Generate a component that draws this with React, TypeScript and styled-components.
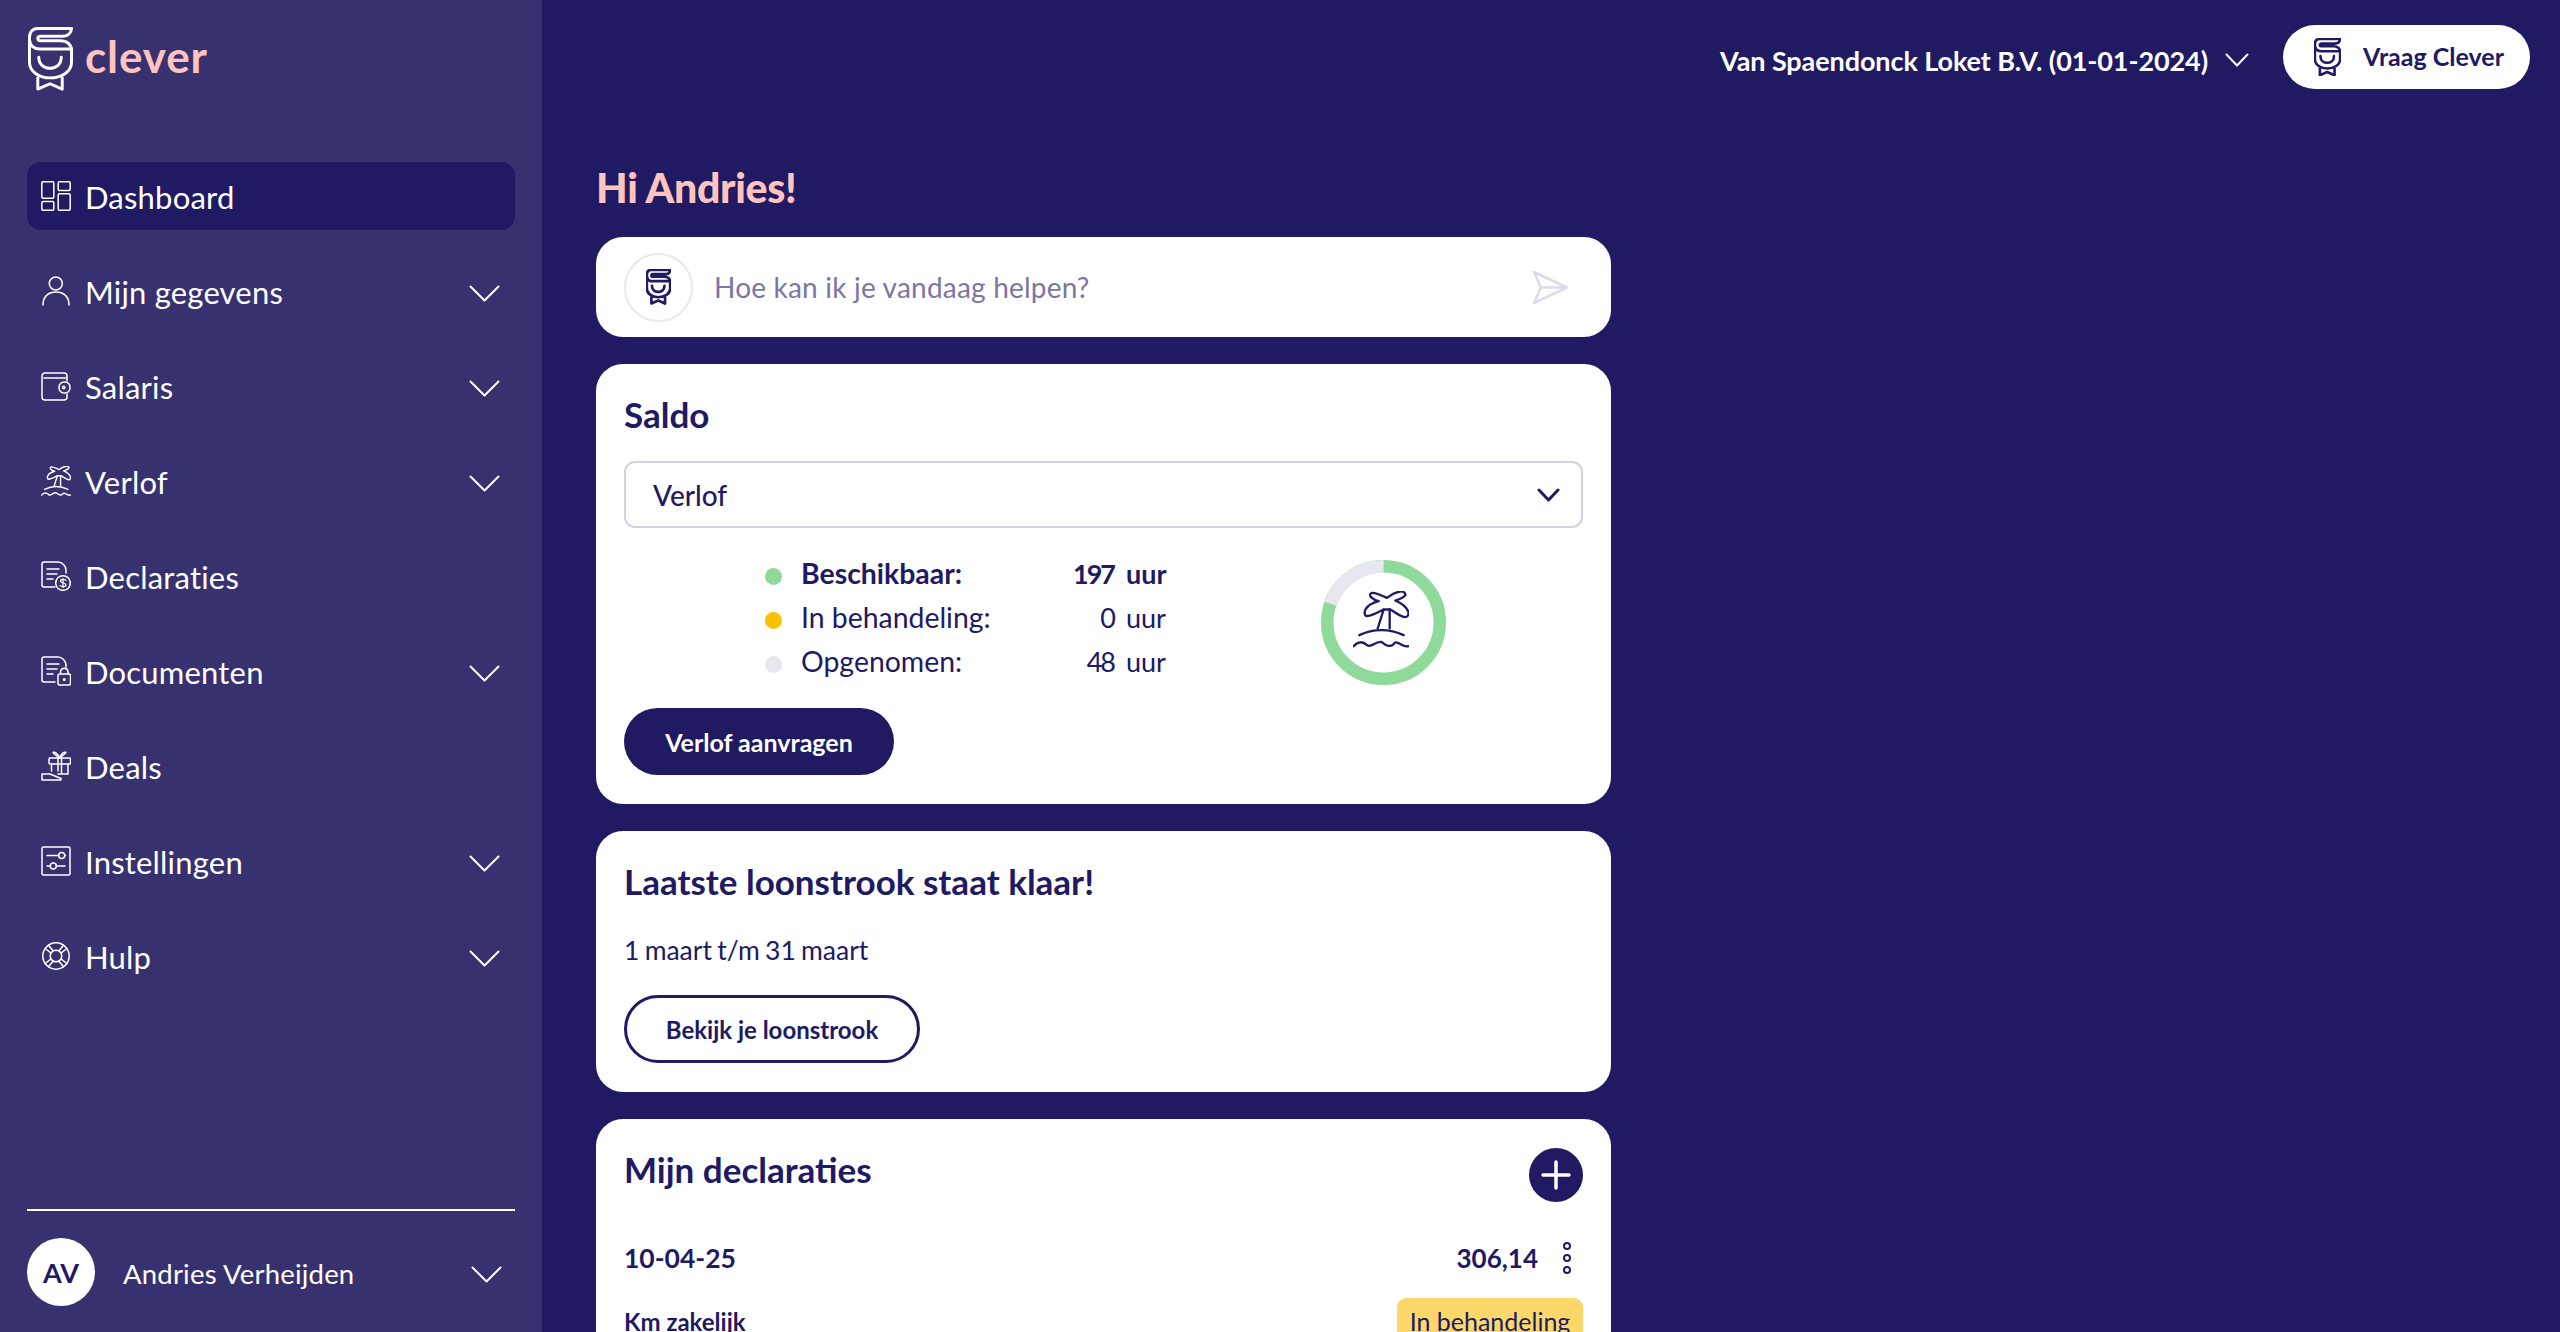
import React from "react";
import styled, { createGlobalStyle } from "styled-components";

const navy = "#201a63";
const font = `"Lato", "Noto Sans", "Liberation Sans", sans-serif`;

const Global = createGlobalStyle`
  html, body { margin: 0; padding: 0; height: 100%; overflow: hidden; background: ${navy}; }
  * { box-sizing: border-box; }
  body { font-family: ${font}; color: ${navy}; }
`;

const Page = styled.div`display: flex; width: 100%; height: 100vh; overflow: hidden; background: ${navy};`;
const Sidebar = styled.aside`
  width: 542px; flex: none; height: 100%; background: #38316f; color: #fff;
  padding: 27px 27px 26px; display: flex; flex-direction: column;
`;
const LogoRow = styled.div`display: flex; align-items: center; gap: 12px; height: 65px; padding-left: 1px;`;
const LogoText = styled.span`font-size: 44px; font-weight: 700; color: #ffc4bd; letter-spacing: 0.9px; line-height: 60px; margin-top: -7px;`;
const Nav = styled.nav`display: flex; flex-direction: column; gap: 27px; margin-top: 70px;`;
const NavItem = styled.div<{ $active?: boolean }>`
  height: 68px; display: flex; align-items: center; padding: 0 15px 0 14px; border-radius: 14px;
  background: ${(p) => (p.$active ? navy : "transparent")};
`;
const NavLabel = styled.span`font-size: 31px; margin: 2px 0 0 14px; flex: 1; letter-spacing: 0.2px; line-height: 40px;`;
const NavChevron = styled.span`display: flex; margin-top: 4px;`;
const Footer = styled.div`
  margin-top: auto; border-top: 2px solid #fff; padding-top: 27px; display: flex; align-items: center;
`;
const Avatar = styled.div`
  width: 68px; height: 68px; border-radius: 50%; background: #fff; color: ${navy};
  display: flex; align-items: center; justify-content: center; font-weight: 700; font-size: 27px;
`;
const UserName = styled.span`font-size: 27.5px; margin: 2px 0 0 28px; flex: 1; letter-spacing: 0.2px;`;
const FooterChevron = styled.span`display: flex; margin: 4px 13px 0 0;`;

const Main = styled.main`flex: 1; min-width: 0; height: 100%; overflow: hidden; padding: 25px 30px 0 54px;`;
const TopBar = styled.header`display: flex; justify-content: flex-end; align-items: center; height: 64px;`;
const Company = styled.span`font-size: 27px; font-weight: 700; color: #fff; margin-top: 6px; letter-spacing: -0.09px;`;
const TopChevron = styled.span`display: flex; margin: 6px 34px 0 17px;`;
const AskButton = styled.button`
  width: 247px; height: 64px; border: 0; border-radius: 32px; background: #fff; color: ${navy};
  display: flex; align-items: center; padding: 0 0 0 31px; font-family: ${font}; font-size: 25px; font-weight: 700;
`;
const AskLabel = styled.span`margin-left: 22px; margin-top: -2px;`;
const Column = styled.div`width: 1015px; display: flex; flex-direction: column;`;
const Greeting = styled.h1`margin: 74px 0 24px; font-size: 41px; line-height: 50px; font-weight: 900; letter-spacing: -0.3px; color: #ffc4bd;`;
const Card = styled.section`
  background: #fff; border-radius: 27px; padding: 28px 28px 29px; margin-bottom: 27px; flex: none;
`;
const ChatCard = styled(Card)`height: 100px; padding: 0 42px 0 28px; display: flex; align-items: center;`;
const ChatBadge = styled.div`
  width: 69px; height: 69px; border-radius: 50%; border: 2px solid #e9e8f0;
  display: flex; align-items: center; justify-content: center; flex: none;
`;
const Placeholder = styled.span`font-size: 28px; color: #7b76a5; margin-left: 21px; flex: 1; letter-spacing: 0.2px;`;
const CardTitle = styled.h2`margin: 0; padding-bottom: 2px; font-size: 35px; line-height: 44px; font-weight: 700;`;
const Select = styled.div`
  height: 67px; margin-top: 23px; border: 2px solid #d3d1e2; border-radius: 11px;
  display: flex; align-items: center; justify-content: space-between; padding: 0 21px 0 27px;
  font-size: 28px; font-weight: 500;
`;
const SaldoBody = styled.div`display: flex; align-items: flex-start; padding: 23px 0 0 141px;`;
const Legend = styled.div`width: 401px; display: flex; flex-direction: column;`;
const LegendRow = styled.div<{ $bold?: boolean }>`
  height: 44px; display: flex; align-items: center; font-size: 28.4px; font-weight: ${(p) => (p.$bold ? 700 : 400)};
`;
const Dot = styled.span<{ $color: string }>`
  width: 17px; height: 17px; border-radius: 50%; background: ${(p) => p.$color}; margin: 7px 19px 0 0; flex: none;
`;
const LegendLabel = styled.span`flex: 1; white-space: nowrap;`;
const LegendAmount = styled.span`text-align: right; font-size: 27px; letter-spacing: -2px;`;
const LegendUnit = styled.span`width: 40px; margin-left: 12px; white-space: nowrap; font-size: 27px;`;
const Donut = styled.div`
  width: 125px; height: 125px; margin: 9px 0 0 155px; position: relative; flex: none;
  display: flex; align-items: center; justify-content: center;
`;
const DonutRing = styled.svg`position: absolute; inset: 0;`;
const PalmBox = styled.span`display: flex; margin: 0 6px 6px 0;`;
const Primary = styled.button`
  height: 67px; width: 270px; margin-top: 23px; display: block; border-radius: 34px; border: 0; background: ${navy}; color: #fff;
  font-family: ${font}; font-size: 25px; font-weight: 700;
`;
const Period = styled.p`margin: 27px 0; font-size: 26.5px; line-height: 36px; word-spacing: -1.5px;`;
const Outline = styled.button`
  height: 68px; width: 296px; display: block; border-radius: 34px; border: 3.5px solid ${navy}; background: #fff; color: ${navy};
  font-family: ${font}; font-size: 24px; font-weight: 700;
`;
const HeaderRow = styled.div`display: flex; justify-content: space-between; align-items: flex-start;`;
const PlusButton = styled.div`
  width: 54px; height: 54px; border-radius: 50%; background: ${navy};
  display: flex; align-items: center; justify-content: center; margin-top: 1px;
`;
const ClaimRow = styled.div`display: flex; justify-content: space-between; align-items: center; font-weight: 700;`;
const ClaimTop = styled(ClaimRow)`height: 36px; margin-top: 38px; font-size: 26.5px;`;
const ClaimBottom = styled(ClaimRow)`height: 46px; margin-top: 22px; font-size: 24px;`;
const AmountBox = styled.div`display: flex; align-items: center; gap: 24px; margin-right: 11px; font-size: 26px;`;
const Badge = styled.span`
  height: 46px; width: 186px; background: #fcd86b; border-radius: 9px; font-weight: 400; font-size: 25px;
  display: flex; align-items: center; justify-content: center;
`;

const Chevron = ({ w, h, color = "#fff", sw = 2 }: { w: number; h: number; color?: string; sw?: number }) => (
  <svg width={w} height={h} viewBox={`0 0 ${w} ${h}`} fill="none" stroke={color} strokeWidth={sw} strokeLinecap="round" strokeLinejoin="round" style={{ flex: "none" }}>
    <path d={`M${sw / 2 + 0.5} ${sw / 2 + 0.5} L${w / 2} ${h - sw / 2 - 0.5} L${w - sw / 2 - 0.5} ${sw / 2 + 0.5}`} />
  </svg>
);

const ButlerLogo = ({ w, color, sw }: { w: number; color: string; sw: number }) => (
  <svg width={w} height={(w * 66) / 46} viewBox="0 0 46 66" fill="none" stroke={color} strokeWidth={sw} strokeLinecap="round" strokeLinejoin="round" style={{ flex: "none" }}>
    <path d="M44 1.5H10C4 1.5 1.5 6 1.5 11V36C1.5 46 12 52 22.5 52C34 52 44.5 46 44.5 36V24" />
    <path d="M44.5 1.5C44 6 41 9.5 36 9.5H13C9 9.5 9 14 13 14H33C40 14 44.5 18 44.5 24" />
    <path d="M1.5 13C2 19 6 22.5 12 22.5H44.5" />
    <path d="M11 31C11 46 34 46 34 31" />
    <path d="M10 52V63.5L22.5 58L35 63.5V52" />
  </svg>
);

const PalmShapes = () => (
  <>
    <path d="M102 20C85 12 68 4 57 5C50 6 50 14 54 18C60 24 68 28 77 30C62 34 45 42 38 54C33 62 34 74 42 75C58 74 78 62 92 55L112 55C125 62 140 75 155 78C165 78 168 70 166 62C162 50 145 36 127 28C140 24 152 20 157 12C158 4 150 0 142 1C128 3 114 10 102 20Z" />
    <path d="M74 112L92 55M110 112V55" />
    <path d="M19 132C60 112 110 112 152 132" />
    <path d="M2 165C15 150 30 150 42 162C55 172 65 150 85 152C100 165 115 170 125 155C135 148 150 170 166 165" />
  </>
);

const Icon = ({ children }: { children: React.ReactNode }) => (
  <svg width={30} height={30} viewBox="0 0 30 30" fill="none" stroke="#fff" strokeWidth={1.5} strokeLinecap="round" strokeLinejoin="round" style={{ flex: "none" }}>
    {children}
  </svg>
);

const icons: Record<string, React.ReactNode> = {
  dashboard: (
    <Icon>
      <rect x=".8" y=".8" width="12" height="16.5" rx="1.2" />
      <rect x=".8" y="20.5" width="12" height="8.7" rx="1.2" />
      <rect x="17.2" y=".8" width="12" height="8.7" rx="1.2" />
      <rect x="17.2" y="12.7" width="12" height="16.5" rx="1.2" />
    </Icon>
  ),
  person: (
    <Icon>
      <circle cx="14.8" cy="7.5" r="6.5" />
      <path d="M2 29C2 20 8 16 15 16C22 16 28 20 28 29" />
    </Icon>
  ),
  wallet: (
    <Icon>
      <path d="M26 10V5A3 3 0 0 0 23 2H4A3 3 0 0 0 1 5V26A3 3 0 0 0 4 29H23A3 3 0 0 0 26 26V23" />
      <path d="M3 7H25" />
      <rect x="18" y="11" width="11" height="11" rx="5" />
      <circle cx="22.7" cy="16.5" r="1.2" />
    </Icon>
  ),
  island: (
    <svg width={30} height={30} viewBox="0 0 168 170" fill="none" stroke="#fff" strokeWidth={8} strokeLinecap="round" strokeLinejoin="round" style={{ flex: "none" }}>
      <PalmShapes />
    </svg>
  ),
  docDollar: (
    <Icon>
      <path d="M14 26H3A2 2 0 0 1 1 24V3A2 2 0 0 1 3 1H17C21 1 25 5 25 9V12" />
      <path d="M6 8H18M6 13H16M6 18H12" />
      <circle cx="22" cy="22" r="7.3" />
      <path d="M25 19.5C24 18 19.5 18 19.5 20C19.5 22.5 25 21.5 25 24C25 26 20 26 19 24.5M22 17.5V26.5" strokeWidth={1.2} />
    </Icon>
  ),
  docLock: (
    <Icon>
      <path d="M14 26H3A2 2 0 0 1 1 24V3A2 2 0 0 1 3 1H17C21 1 25 5 25 9V11" />
      <path d="M6 8H18M6 13H16M6 18H12" />
      <rect x="17" y="18" width="12.5" height="11" rx="1.5" />
      <path d="M19.5 18V15.5A3.8 3.8 0 0 1 27 15.5V18" />
      <circle cx="23.3" cy="23.5" r=".8" />
    </Icon>
  ),
  gift: (
    <Icon>
      <rect x="8" y="7" width="21.5" height="6" rx="1" />
      <path d="M10.5 13V20M27 13V23H17M17 7V20M20.5 7V23" />
      <path d="M18.5 7C16 5 13 3.5 12 1.5C14 0.5 17 3 18.5 7C20 3 23 0.5 25 1.5C24 3.5 21 5 18.5 7Z" />
      <path d="M1 29V23H9L20 27.5V29Z" />
    </Icon>
  ),
  sliders: (
    <Icon>
      <rect x="1" y="1" width="28" height="28" rx="1.5" />
      <path d="M6 9.5H17.5M24 9.5H24.5M6 20H9M15.5 20H24" />
      <circle cx="20.7" cy="9.5" r="3" />
      <circle cx="12.3" cy="20" r="3" />
    </Icon>
  ),
  buoy: (
    <Icon>
      <circle cx="15" cy="15" r="13.2" />
      <circle cx="15" cy="15" r="5.8" />
      <path d="M7.5 4.2L12 9.8M4.2 7.5L9.8 12M22.5 4.2L18 9.8M25.8 7.5L20.2 12M7.5 25.8L12 20.2M4.2 22.5L9.8 18M22.5 25.8L18 20.2M25.8 22.5L20.2 18" />
    </Icon>
  ),
};

const navItems = [
  { label: "Dashboard", icon: "dashboard", active: true },
  { label: "Mijn gegevens", icon: "person", more: true },
  { label: "Salaris", icon: "wallet", more: true },
  { label: "Verlof", icon: "island", more: true },
  { label: "Declaraties", icon: "docDollar" },
  { label: "Documenten", icon: "docLock", more: true },
  { label: "Deals", icon: "gift" },
  { label: "Instellingen", icon: "sliders", more: true },
  { label: "Hulp", icon: "buoy", more: true },
];

const legend = [
  { label: "Beschikbaar:", amount: "197", color: "#8fd99b", bold: true },
  { label: "In behandeling:", amount: "0", color: "#fbc102" },
  { label: "Opgenomen:", amount: "48", color: "#e8e7ef" },
];

export default function App() {
  const r = 56.25;
  const c = 2 * Math.PI * r;
  const takenShare = 48 / 245;
  return (
    <Page>
      <Global />
      <Sidebar>
        <LogoRow>
          <ButlerLogo w={45} color="#fff" sw={3} />
          <LogoText>clever</LogoText>
        </LogoRow>
        <Nav>
          {navItems.map((n) => (
            <NavItem key={n.label} $active={n.active}>
              {icons[n.icon]}
              <NavLabel>{n.label}</NavLabel>
              {n.more && (
                <NavChevron>
                  <Chevron w={31} h={17} />
                </NavChevron>
              )}
            </NavItem>
          ))}
        </Nav>
        <Footer>
          <Avatar>AV</Avatar>
          <UserName>Andries Verheijden</UserName>
          <FooterChevron>
            <Chevron w={31} h={17} />
          </FooterChevron>
        </Footer>
      </Sidebar>
      <Main>
        <TopBar>
          <Company>Van Spaendonck Loket B.V. (01-01-2024)</Company>
          <TopChevron>
            <Chevron w={24} h={14} />
          </TopChevron>
          <AskButton>
            <ButlerLogo w={27} color={navy} sw={4.5} />
            <AskLabel>Vraag Clever</AskLabel>
          </AskButton>
        </TopBar>
        <Column>
          <Greeting>Hi Andries!</Greeting>
          <ChatCard>
            <ChatBadge>
              <ButlerLogo w={25} color={navy} sw={5} />
            </ChatBadge>
            <Placeholder>Hoe kan ik je vandaag helpen?</Placeholder>
            <svg width="37" height="35" viewBox="0 0 37 35" fill="none" stroke="#dcdbe9" strokeWidth="2.5" strokeLinejoin="round" strokeLinecap="round">
              <path d="M2 2L35 17.5L2 33L9 17.5ZM9 17.5H35" />
            </svg>
          </ChatCard>
          <Card>
            <CardTitle>Saldo</CardTitle>
            <Select>
              Verlof
              <Chevron w={23} h={14} color={navy} sw={3} />
            </Select>
            <SaldoBody>
              <Legend>
                {legend.map((l) => (
                  <LegendRow key={l.label} $bold={l.bold}>
                    <Dot $color={l.color} />
                    <LegendLabel>{l.label}</LegendLabel>
                    <LegendAmount>{l.amount}</LegendAmount>
                    <LegendUnit>uur</LegendUnit>
                  </LegendRow>
                ))}
              </Legend>
              <Donut>
                <DonutRing width="125" height="125" viewBox="0 0 125 125" fill="none" strokeWidth="12.5">
                  <circle cx="62.5" cy="62.5" r={r} stroke="#8fd99b" />
                  <circle
                    cx="62.5"
                    cy="62.5"
                    r={r}
                    stroke="#e8e7ef"
                    strokeDasharray={`${c * takenShare} ${c}`}
                    transform={`rotate(${-90 - 360 * takenShare} 62.5 62.5)`}
                  />
                </DonutRing>
                <PalmBox>
                  <svg width="56" height="57" viewBox="0 0 168 170" fill="none" stroke={navy} strokeWidth="7" strokeLinecap="round" strokeLinejoin="round">
                    <PalmShapes />
                  </svg>
                </PalmBox>
              </Donut>
            </SaldoBody>
            <Primary>Verlof aanvragen</Primary>
          </Card>
          <Card>
            <CardTitle>Laatste loonstrook staat klaar!</CardTitle>
            <Period>1 maart t/m 31 maart</Period>
            <Outline>Bekijk je loonstrook</Outline>
          </Card>
          <Card>
            <HeaderRow>
              <CardTitle>Mijn declaraties</CardTitle>
              <PlusButton>
                <svg width="30" height="30" viewBox="0 0 30 30" stroke="#fff" strokeWidth="3.5" strokeLinecap="round">
                  <path d="M15 2V28M2 15H28" />
                </svg>
              </PlusButton>
            </HeaderRow>
            <ClaimTop>
              <span>10-04-25</span>
              <AmountBox>
                <span>306,14</span>
                <svg width="10" height="32" viewBox="0 0 10 32" fill="none" stroke={navy} strokeWidth="2">
                  <circle cx="5" cy="4" r="3" />
                  <circle cx="5" cy="16" r="3" />
                  <circle cx="5" cy="28" r="3" />
                </svg>
              </AmountBox>
            </ClaimTop>
            <ClaimBottom>
              <span>Km zakelijk</span>
              <Badge>In behandeling</Badge>
            </ClaimBottom>
          </Card>
        </Column>
      </Main>
    </Page>
  );
}
